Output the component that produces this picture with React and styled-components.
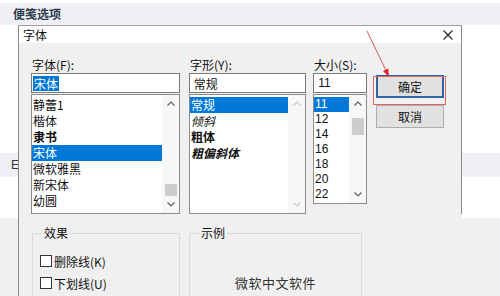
import React from 'react'
import styled, { createGlobalStyle } from 'styled-components'

const GlobalStyle = createGlobalStyle`
  body {
    margin: 0;
    background: #fff;
    font-family: "Noto Sans CJK SC", "Noto Sans", sans-serif;
  }
`

const Page = styled.div`
  position: relative;
  width: 500px;
  height: 296px;
  overflow: hidden;
  display: flex;
  flex-direction: column;
  background: #fff;
`

const TopBand = styled.div`
  margin-top: 3px;
  height: 22px;
  background: #eff0f3;
  padding-left: 13px;
  font-size: 12px;
  font-weight: 700;
  line-height: 22px;
  color: #2d3b4d;
`

const Blank = styled.div`
  height: ${p => p.h}px;
  background: #fff;
`

const MidBand = styled.div`
  height: 24px;
  background: #eff0f3;
  padding-left: 11px;
  font-family: "Liberation Sans", sans-serif;
  font-size: 12px;
  line-height: 24px;
  color: #333;
`

const Footer = styled.div`
  flex: 1;
  background: #f0f0f0;
`

const Dialog = styled.div`
  position: absolute;
  left: 18px;
  top: 25px;
  width: 443px;
  height: 280px;
  border-left: 1px solid #8a8a8a;
  border-top: 1px solid #a0a0a0;
  background: #f0f0f0;
  display: flex;
  flex-direction: column;
  font-size: 12px;
  color: #111;
`

const TitleBar = styled.div`
  height: 22px;
  background: #fff;
  border-right: 1px solid #8a8a8a;
  display: flex;
  align-items: center;
  justify-content: space-between;
  padding: 0 8px 0 4px;
  font-size: 12px;
`

const Upper = styled.div`
  display: flex;
  padding: 15px 0 0 12px;
  border-right: 1px solid #8a8a8a;
  height: 156px;
`

const Column = styled.div`
  width: ${p => p.w}px;
  margin-right: ${p => p.gap || 0}px;
  display: flex;
  flex-direction: column;
`

const Label = styled.div`
  height: 14px;
  line-height: 14px;
  font-size: 12px;
  margin-bottom: 1px;
  padding-left: 1px;
`

const Input = styled.div`
  box-sizing: border-box;
  height: 20px;
  border: 1px solid #7a7a7a;
  background: #fff;
  padding-left: 1px;
  display: flex;
  align-items: center;
  font-size: 12px;
  font-family: ${p => (p.num ? '"Liberation Sans", sans-serif' : 'inherit')};
`

const Selected = styled.span`
  background: #0078d7;
  color: #fff;
  padding: 0 1px;
  line-height: 15px;
`

const List = styled.div`
  box-sizing: border-box;
  margin-top: 1px;
  height: ${p => p.h}px;
  border: 1px solid #8c8c8c;
  background: #fff;
  display: flex;
  overflow: hidden;
`

const Items = styled.div`
  flex: 1;
  padding-top: 2px;
  display: flex;
  flex-direction: column;
`

const Item = styled.div`
  height: ${p => p.h || 16}px;
  line-height: ${p => p.h || 16}px;
  padding-left: 1px;
  font-size: 12px;
  font-family: ${p => (p.num ? '"Liberation Sans", sans-serif' : 'inherit')};
  font-weight: ${p => (p.bold ? 700 : 400)};
  font-style: ${p => (p.italic ? 'italic' : 'normal')};
  background: ${p => (p.sel ? '#0078d7' : 'transparent')};
  color: ${p => (p.sel ? '#fff' : '#111')};
`

const Scrollbar = styled.div`
  width: 17px;
  background: #f7f7f7;
  display: flex;
  flex-direction: column;
`

const Arrow = styled.div`
  height: 17px;
  display: flex;
  align-items: center;
  justify-content: center;
  flex: none;
`

const Track = styled.div`
  flex: 1;
  display: flex;
  justify-content: center;
`

const Thumb = styled.div`
  width: 12px;
  margin-top: ${p => p.top}px;
  height: ${p => p.h}px;
  background: #cdcdcd;
`

const Buttons = styled.div`
  padding-top: 17px;
  display: flex;
  flex-direction: column;
  gap: 7px;
`

const Button = styled.div`
  box-sizing: border-box;
  width: 68px;
  height: 23px;
  background: #e1e1e1;
  border: ${p => (p.primary ? '2px solid #2e63a8' : '1px solid #adadad')};
  display: flex;
  align-items: center;
  justify-content: center;
  font-size: 12px;
`

const Lower = styled.div`
  display: flex;
  padding: 12px 0 0 13px;
  gap: 9px;
`

const Group = styled.fieldset`
  box-sizing: border-box;
  margin: 0;
  width: ${p => p.w}px;
  height: 80px;
  border: 1px solid #dadada;
  border-bottom: none;
  padding: 10px 0 0 7px;
`

const Legend = styled.legend`
  padding: 0 2px;
  margin-left: 2px;
  line-height: 14px;
  font-size: 12px;
`

const CheckRow = styled.div`
  height: 22px;
  display: flex;
  align-items: center;
  gap: 2px;
  font-size: 12px;
`

const Box = styled.span`
  box-sizing: border-box;
  width: 12px;
  height: 12px;
  border: 1px solid #333;
  background: #fff;
`

const Sample = styled.div`
  padding-top: 23px;
  margin-left: -7px;
  text-align: center;
  font-size: 13px;
  line-height: 20px;
  letter-spacing: 0.5px;
  color: #333;
`

const RedFrame = styled.div`
  position: absolute;
  left: 373px;
  top: 76px;
  width: 71px;
  height: 27px;
  border: 1px solid #e06666;
  pointer-events: none;
`

const ArrowSvg = styled.svg`
  position: absolute;
  left: 360px;
  top: 28px;
`

const Chevron = ({ up, color = '#606060' }) => (
  <svg width="8" height="5" viewBox="0 0 8 5">
    <polyline
      points={up ? '0.5,4.5 4,1 7.5,4.5' : '0.5,0.5 4,4 7.5,0.5'}
      fill="none"
      stroke={color}
      strokeWidth="1.2"
    />
  </svg>
)

const Bar = ({ trackTop, thumb, disabled }) => (
  <Scrollbar>
    <Arrow>
      <Chevron up color={disabled ? '#c8c8c8' : '#606060'} />
    </Arrow>
    <Track>{thumb && <Thumb top={trackTop} h={thumb} />}</Track>
    <Arrow>
      <Chevron color={disabled ? '#c8c8c8' : '#606060'} />
    </Arrow>
  </Scrollbar>
)

const fonts = [
  { name: '静蕾1' },
  { name: '楷体' },
  { name: '隶书', bold: true },
  { name: '宋体', sel: true },
  { name: '微软雅黑' },
  { name: '新宋体' },
  { name: '幼圆' },
]

const styles = [
  { name: '常规', sel: true },
  { name: '倾斜', italic: true },
  { name: '粗体', bold: true },
  { name: '粗偏斜体', bold: true, italic: true },
]

const sizes = ['11', '12', '14', '16', '18', '20', '22']

export default function App() {
  return (
    <>
      <GlobalStyle />
      <Page>
        <TopBand>便笺选项</TopBand>
        <Blank h={128} />
        <MidBand>E</MidBand>
        <Blank h={41} />
        <Footer />

        <Dialog>
          <TitleBar>
            <span>字体</span>
            <svg width="10" height="10" viewBox="0 0 10 10">
              <path d="M0.5 0.5 L9.5 9.5 M9.5 0.5 L0.5 9.5" stroke="#222" strokeWidth="1.1" />
            </svg>
          </TitleBar>
          <Upper>
            <Column w={149} gap={9}>
              <Label>字体(F):</Label>
              <Input>
                <Selected>宋体</Selected>
              </Input>
              <List h={120}>
                <Items>
                  {fonts.map(f => (
                    <Item key={f.name} sel={f.sel} bold={f.bold}>
                      {f.name}
                    </Item>
                  ))}
                </Items>
                <Bar trackTop={72} thumb={12} />
              </List>
            </Column>
            <Column w={117} gap={7}>
              <Label>字形(Y):</Label>
              <Input>&nbsp;常规</Input>
              <List h={120}>
                <Items>
                  {styles.map(s => (
                    <Item key={s.name} sel={s.sel} bold={s.bold} italic={s.italic}>
                      {s.name}
                    </Item>
                  ))}
                </Items>
                <Bar disabled />
              </List>
            </Column>
            <Column w={54} gap={9}>
              <Label>大小(S):</Label>
              <Input num>&nbsp;11</Input>
              <List h={110}>
                <Items>
                  {sizes.map((s, i) => (
                    <Item key={s} h={15} num sel={i === 0}>
                      {s}
                    </Item>
                  ))}
                </Items>
                <Bar trackTop={6} thumb={17} />
              </List>
            </Column>
            <Buttons>
              <Button primary>确定</Button>
              <Button>取消</Button>
            </Buttons>
          </Upper>
          <Lower>
            <Group w={148}>
              <Legend>效果</Legend>
              <CheckRow>
                <Box />
                删除线(K)
              </CheckRow>
              <CheckRow>
                <Box />
                下划线(U)
              </CheckRow>
            </Group>
            <Group w={173}>
              <Legend>示例</Legend>
              <Sample>微软中文软件</Sample>
            </Group>
          </Lower>
        </Dialog>

        <RedFrame />
        <ArrowSvg width="40" height="52" viewBox="0 0 40 52">
          <line x1="7" y1="3" x2="25.6" y2="41.8" stroke="#d25a5e" strokeWidth="1" />
          <polygon points="29,49 28.3,40.5 22.9,43.1" fill="#e02a2a" />
        </ArrowSvg>
      </Page>
    </>
  )
}
